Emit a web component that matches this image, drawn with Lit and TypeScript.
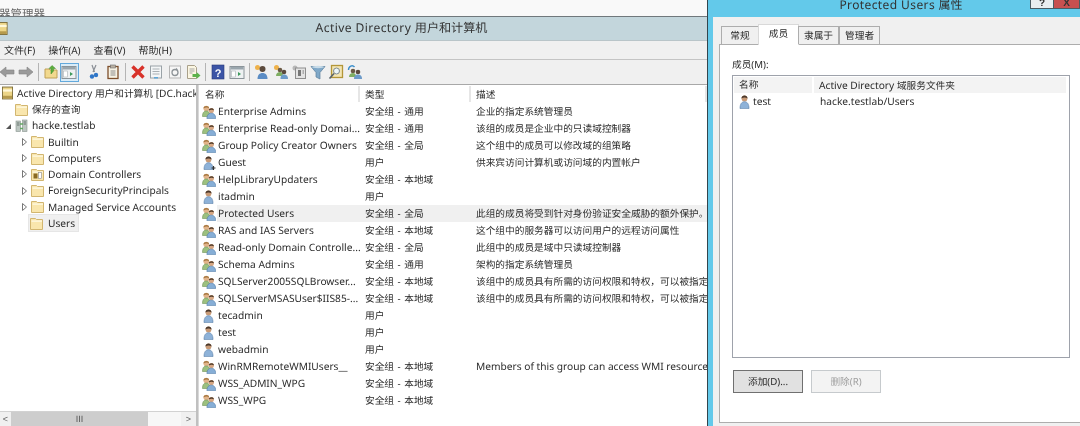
import { LitElement, html, css, svg } from "lit";
import { customElement } from "lit/decorators.js";

const group = () => html`<svg class="ic" viewBox="0 0 14 14">
  <circle cx="4.300" cy="3.600" r="2.800" fill="#e2b48a"/><path d="M1.500 3.400C1.500 .3 7.100 .3 7.100 3.200 5.400 2.200 3.300 2.400 1.500 3.400z" fill="#a5763f"/>
  <path d="M.5 11.500c0-4 1.500-5.500 3.800-5.500s3.500 1.500 3.500 5.500z" fill="#9cc07f" stroke="#6f9358" stroke-width=".6"/>
  <circle cx="9.300" cy="5.600" r="2.600" fill="#d8a884"/><path d="M6.700 5.400C6.700 2.600 11.900 2.600 11.900 5.200 10.300 4.400 8.300 4.500 6.700 5.400z" fill="#54402e"/>
  <path d="M4.900 13.600c0-3.800 2-5.400 4.400-5.400s4.400 1.600 4.400 5.400z" fill="#86aed6" stroke="#4f7ba8" stroke-width=".6"/>
</svg>`;
const user = (guest = false) => html`<svg class="ic" viewBox="0 0 14 14">
  <circle cx="6.500" cy="3.500" r="2.900" fill="#c89a76"/><path d="M3.500 3.500C3.300 -.4 9.700 -.4 9.500 3.500 8 2.300 5 2.300 3.500 3.500z" fill="#4a382b"/>
  <path d="M2 13.600c0-4.600 1.700-6.900 4.500-6.900s4.500 2.300 4.500 6.900z" fill="#8eb2d8" stroke="#557ca6" stroke-width=".6"/>
  ${guest ? svg`<path d="M9.500 12h4M11.500 10v4" stroke="#333" stroke-width="1.200"/>` : ""}
</svg>`;
const folder = (doc = false) => html`<svg class="fo" viewBox="0 0 13 13">
  <path d="M.5 1.500h5l1 1h6v10H.5z" fill="#f9e6ad" stroke="#d2b670"/>
  <path d="M1.500 3.500h10.500v1.200H1.500z" fill="#fffbe8"/>
  ${doc ? svg`<rect x="2.500" y="5.500" width="4" height="5" fill="#8a6a22"/><rect x="7.500" y="4.500" width="3" height="6" fill="#fff" stroke="#8a8a8a" stroke-width=".6"/>` : ""}
</svg>`;
const binder = () => html`<svg class="fo" viewBox="0 0 12 14">
  <rect x=".5" y=".5" width="11" height="13" fill="#ecd587" stroke="#7c6d3a"/>
  <rect x="1" y="3" width="10" height="2.500" fill="#fff8d8"/><rect x="1" y="10" width="10" height="3" fill="#b59a4c"/>
</svg>`;
const domain = () => html`<svg class="fo" viewBox="0 0 13 13">
  <rect x="1" y="2" width="4.500" height="10.500" fill="#bcc6c1" stroke="#87938d" stroke-width=".6"/>
  <rect x="7.500" y="1" width="4.500" height="11.500" fill="#bcc6c1" stroke="#87938d" stroke-width=".6"/>
  <path d="M5 5h3M5 9.500h3" stroke="#63a863" stroke-width="1.600"/><path d="M2 4h2.500M2 6h2.500M8.500 3h2.500M8.500 5h2.500" stroke="#66736d"/>
</svg>`;
const paneIcon = (c: string) => svg`<rect x="1" y="2.500" width="14" height="12" fill="#eef1f2" stroke="#8b949a"/><rect x="1.500" y="3" width="13" height="2.500" fill="#9aa6ad"/><rect x="2.500" y="7" width="4" height="6" fill="#fff" stroke="#a9b1b5" stroke-width=".6"/><path d="M9 8l3 2-3 2z" fill="${c}"/>`;

const tools = [
  html`<svg class="t" viewBox="0 0 16 16"><path d="M1 8l6-5v3h8v4H7v3z" fill="#9a9a9a" stroke="#838383" stroke-width=".6"/></svg>`,
  html`<svg class="t" viewBox="0 0 16 16"><path d="M15 8L9 3v3H1v4h8v3z" fill="#9a9a9a" stroke="#838383" stroke-width=".6"/></svg>`,
  "sep",
  html`<svg class="t" viewBox="0 0 16 16"><path d="M2 5h4l1 1h7v8H2z" fill="#f2d98e" stroke="#bfa057"/><path d="M8 10V4.500H6l3-3 3.500 3h-2V7z" fill="#5cae3c" stroke="#3c8a28" stroke-width=".5"/></svg>`,
  html`<span class="on"><svg class="t" viewBox="0 0 16 16">${paneIcon("#3c9a5c")}</svg></span>`,
  "gap",
  html`<svg class="t" viewBox="0 0 16 16"><path d="M10 1L7 8M6 1l2.500 7" stroke="#8a8f96" stroke-width="1.200"/><circle cx="6" cy="12.500" r="2.200" fill="#2f76c8"/><circle cx="10" cy="11" r="2.200" fill="#2f76c8"/></svg>`,
  html`<svg class="t" viewBox="0 0 16 16"><rect x="3" y="2.500" width="10" height="12" fill="#f7f2e4" stroke="#7d4f2c" stroke-width="1.300"/><rect x="5.500" y="1" width="5" height="3" fill="#b9b1a3" stroke="#6b6b6b" stroke-width=".6"/><path d="M5.500 7h5M5.500 9h5M5.500 11h5" stroke="#8c8c8c"/></svg>`,
  "sep",
  html`<svg class="t" viewBox="0 0 16 16"><path d="M2.500 2.500l11 11M13.500 2.500l-11 11" stroke="#d8322a" stroke-width="3.400"/></svg>`,
  html`<svg class="t" viewBox="0 0 16 16"><rect x="2.500" y="2" width="11" height="12" fill="#f4f6f7" stroke="#9aa2a7"/><path d="M4.500 5h7M4.500 7.500h7M4.500 10h7" stroke="#aab0b4"/><rect x="6" y="13" width="4" height="1.500" fill="#5da6d8"/></svg>`,
  html`<svg class="t" viewBox="0 0 16 16"><rect x="2.500" y="2" width="11" height="12" fill="#f6f6f6" stroke="#b5b5b5"/><circle cx="8" cy="8.500" r="3" fill="none" stroke="#8d9397" stroke-width="1.300"/><path d="M9 3.800l2 1.700-2.200.7z" fill="#8d9397"/></svg>`,
  html`<svg class="t" viewBox="0 0 16 16"><path d="M2.500 1.500h7l2 2v11h-9z" fill="#fbf6e2" stroke="#a9a08a"/><path d="M4.500 5h5M4.500 7h5M4.500 9h3" stroke="#a7a7a7"/><path d="M7.500 10h4V8l4 3.500-4 3.500v-2h-4z" fill="#5cb24a"/></svg>`,
  "sep",
  html`<svg class="t" viewBox="0 0 16 16"><rect x="2" y="1" width="12" height="14" fill="#3b54a6" stroke="#28397a" stroke-width=".6"/><text x="8" y="12.500" font-family="Liberation Sans" font-weight="700" font-size="11" text-anchor="middle" fill="#fff">?</text></svg>`,
  html`<svg class="t" viewBox="0 0 16 16">${paneIcon("#3c9a5c")}</svg>`,
  "sep",
  html`<svg class="t" viewBox="0 0 16 16"><circle cx="3.500" cy="3.500" r="2.500" fill="#efb24a"/><circle cx="8.500" cy="5" r="3" fill="#5b4a3c"/><path d="M3.500 15c0-4 2-6 5-6s5 2 5 6z" fill="#5b8cc4"/></svg>`,
  html`<svg class="t" viewBox="0 0 16 16"><circle cx="3.500" cy="3.500" r="2.500" fill="#efb24a"/><circle cx="7" cy="6" r="2.300" fill="#6b5a45"/><path d="M3 12c0-3 2-4 4-4s3 1 3 4z" fill="#7fae62"/><circle cx="11" cy="8" r="2.300" fill="#5b4a3c"/><path d="M7.500 15c0-3.500 1.500-4.500 3.500-4.500s4 1 4 4.500z" fill="#6d9bc9"/></svg>`,
  html`<svg class="t" viewBox="0 0 16 16"><circle cx="4" cy="4" r="2.500" fill="#b8b8b8"/><rect x="4.500" y="4" width="10" height="10.500" fill="#e3e3e3" stroke="#8e8e8e"/><rect x="7" y="6" width="3" height="6" fill="#777"/><path d="M11.500 7h1.500M11.500 9h1.500" stroke="#777"/></svg>`,
  html`<svg class="t" viewBox="0 0 16 16"><path d="M1 2.500h14L10 8.500V15l-4-2V8.500z" fill="#7fa8c8" stroke="#5b7f9c" stroke-width=".7"/><ellipse cx="8" cy="3" rx="6" ry="1.200" fill="#c7dbe8"/></svg>`,
  html`<svg class="t" viewBox="0 0 16 16"><rect x="3.500" y="1.500" width="11" height="12" fill="#f3e6b4" stroke="#b39638" stroke-width="1.300"/><circle cx="8.500" cy="7" r="3" fill="#eef6f8" stroke="#7c8a8f"/><path d="M6 9.500L1.500 14.500" stroke="#59636a" stroke-width="1.600"/></svg>`,
  html`<svg class="t" viewBox="0 0 16 16"><path d="M1.500 6c0-4 4-5.500 6-3" fill="none" stroke="#3a8ecb" stroke-width="1.400"/><circle cx="6" cy="7" r="2.300" fill="#6b5a45"/><path d="M2 13c0-3 2-4 4-4s3 1 3 4z" fill="#7fae62"/><circle cx="11" cy="8" r="2.300" fill="#5b4a3c"/><path d="M7 15c0-3.500 2-4.500 4-4.500s4 1 4 4.500z" fill="#6d9bc9"/></svg>`,
];

const LOCAL = "安全组 - 本地域", GLOBAL = "安全组 - 全局", UNI = "安全组 - 通用", USER = "用户";
const PERM = "该组中的成员具有所需的访问权限和特权，可以被指定...";
const rows: [string, string, string, string, boolean?][] = [
  ["g", "Enterprise Admins", UNI, "企业的指定系统管理员"],
  ["g", "Enterprise Read-only Domai...", UNI, "该组的成员是企业中的只读域控制器"],
  ["g", "Group Policy Creator Owners", GLOBAL, "这个组中的成员可以修改域的组策略"],
  ["q", "Guest", USER, "供来宾访问计算机或访问域的内置帐户"],
  ["g", "HelpLibraryUpdaters", LOCAL, ""],
  ["u", "itadmin", USER, ""],
  ["g", "Protected Users", GLOBAL, "此组的成员将受到针对身份验证安全威胁的额外保护。", true],
  ["g", "RAS and IAS Servers", LOCAL, "这个组中的服务器可以访问用户的远程访问属性"],
  ["g", "Read-only Domain Controlle...", GLOBAL, "此组中的成员是域中只读域控制器"],
  ["g", "Schema Admins", UNI, "架构的指定系统管理员"],
  ["g", "SQLServer2005SQLBrowser...", LOCAL, PERM],
  ["g", "SQLServerMSASUser$IIS85-...", LOCAL, PERM],
  ["u", "tecadmin", USER, ""],
  ["u", "test", USER, ""],
  ["u", "webadmin", USER, ""],
  ["g", "WinRMRemoteWMIUsers__", LOCAL, "Members of this group can access WMI resources..."],
  ["g", "WSS_ADMIN_WPG", LOCAL, ""],
  ["g", "WSS_WPG", LOCAL, ""],
];

const tree = [
  { l: 0, t: html`<span class="en">Active Directory </span>用户和计算机<span class="en"> [DC.hacke.testlab]</span>`, i: binder(), a: "" },
  { l: 1, t: "保存的查询", i: folder(), a: "" },
  { l: 1, t: html`<span class="en">hacke.testlab</span>`, i: domain(), a: "open" },
  { l: 2, t: html`<span class="en">Builtin</span>`, i: folder(), a: "closed" },
  { l: 2, t: html`<span class="en">Computers</span>`, i: folder(), a: "closed" },
  { l: 2, t: html`<span class="en">Domain Controllers</span>`, i: folder(true), a: "closed" },
  { l: 2, t: html`<span class="en">ForeignSecurityPrincipals</span>`, i: folder(), a: "closed" },
  { l: 2, t: html`<span class="en">Managed Service Accounts</span>`, i: folder(), a: "closed" },
  { l: 2, t: html`<span class="en">Users</span>`, i: folder(), a: "", sel: true },
];

@customElement("app-root")
export class AppRoot extends LitElement {
  static styles = css`
    :host {
      display: grid; grid-template-columns: 707px 373px; width: 1080px; height: 426px; overflow: hidden;
      background: #fff; color: #2b2b2b; filter: blur(.4px); text-rendering: geometricPrecision;
      font: 9.7px/1 "Noto Sans", "Noto Sans CJK SC", sans-serif;
    }
    .en { font-size: 10.200px; }
    .main { display: flex; flex-direction: column; height: 426px; overflow: hidden; }
    .strip { height: 16px; flex: none; background: #f9f9f9; overflow: hidden; padding-top: 9px; box-sizing: border-box; font-size: 11.500px; color: #666; line-height: 11px; }
    .strip span { display: block; margin-left: -1px; }
    .title { height: 25px; flex: none; box-sizing: border-box; background: #c3d6dc; border-top: 1px solid #70787c; border-bottom: 1px solid #b9c5c9; display: grid; grid-template-columns: auto 1fr; align-items: center; font-size: 12.100px; color: #333; }
    .title svg { width: 12px; height: 13px; margin-left: -4px; }
    .title span { text-align: center; padding-left: 84px; }
    .title .lat { letter-spacing: .4px; padding: 0; }
    .menu { height: 19px; flex: none; box-sizing: border-box; background: #f0f0f0; display: flex; align-items: center; padding-left: 4px; gap: 13px; border-bottom: 1px solid #c4c4c4; font-size: 10px; }
    .tools { height: 25px; flex: none; box-sizing: border-box; background: #f0f0f0; border-bottom: 1px solid #a8a8a8; display: flex; align-items: center; padding-right: 0; }
    .tools > :first-child { margin-left: -2.300px; }
    .cell { width: 18.600px; height: 22px; display: flex; align-items: center; justify-content: center; flex: none; }
    .t { width: 16px; height: 16px; display: block; }
    .on { width: 19px; height: 19px; display: flex; align-items: center; justify-content: center; background: #d9ecf8; border: 1px solid #63a9dc; box-sizing: border-box; flex: none; }
    .sep { width: 1px; height: 18px; background: #b4b4b4; margin: 0 2.700px; flex: none; }
    .gap { width: 6.400px; flex: none; }
    .panes { flex: 1; min-height: 0; display: grid; grid-template-columns: 196px 1fr; column-gap: 3px; background: #c0c0c0; }
    .left { background: #fff; display: flex; flex-direction: column; overflow: hidden; min-width: 0; }
    .treebox { flex: 1; overflow: hidden; }
    .node { height: 16.250px; display: flex; align-items: center; white-space: nowrap; }
    .l0 { padding-left: 2px; } .l1 { padding-left: 3px; } .l2 { padding-left: 19px; }
    .arrow { width: 11px; height: 8px; flex: none; margin-right: 1px; display: flex; justify-content: center; }
    .l0 .arrow { display: none; }
    .arrow svg { width: 7px; height: 8px; display: block; }
    .fo { width: 13px; height: 13px; flex: none; margin-right: 4px; }
    .l0 .fo { width: 11px; height: 14px; margin-right: 4px; }
    .sel { background: #f0f0f0; box-shadow: 0 0 0 1px #e6e6e6; display: flex; align-items: center; height: 16px; padding-left: 1px; padding-right: 3px; margin-left: -2px; }
    .sel .fo { margin-right: 5px; }
    .sb { height: 15px; flex: none; background: #f0f0f0; display: grid; grid-template-columns: 11px 137px 33px 15px; border-top: 1px solid #d2d2d2; box-sizing: border-box; color: #606060; font: 9px/1 "Liberation Sans", sans-serif; }
    .sb span { display: flex; align-items: center; justify-content: center; }
    .sb .thumb { background: #cdcdcd; color: #555; }
    .sb .track { background: #f7f7f7; }
    .right { background: #fff; overflow: hidden; min-width: 0; padding-top: 1px; border-left: 1px solid #d9d9d9; margin-left: -1px; }
    .row { display: grid; grid-template-columns: 161px 111px 1fr; height: 17px; align-items: center; white-space: nowrap; }
    .hd { background: #f2f2f2; border-bottom: 1px solid #fff; box-sizing: border-box; }
    .hd span { background: #fff; height: 100%; display: flex; align-items: center; padding: 1px 0 0 5px; border-right: 2px solid #e6e6e6; box-sizing: border-box; }
    .hd span:first-child { padding-left: 6px; }
    .nm { display: flex; align-items: center; padding-left: 3px; height: 17px; overflow: hidden; }
    .ic { width: 14px; height: 14px; flex: none; margin-right: 1px; display: block; }
    .ty { padding-left: 5px; word-spacing: 1px; }
    .ds { padding-left: 5px; overflow: hidden; height: 17px; line-height: 17px; }
    .row .txt { height: 17px; line-height: 17px; flex: 1; padding-left: 1px; }
    .hot .txt, .hot .ty, .hot .ds { background: #f0f0f0; }
    .hot .ty { height: 17px; line-height: 17px; }
    .dlg { background: #63c9ea; display: flex; flex-direction: column; height: 426px; border-left: 1px solid #33454d; box-sizing: border-box; overflow: hidden; }
    .cap { height: 17px; flex: none; display: grid; grid-template-columns: 1fr 24px 26px; font-size: 12px; color: #333; }
    .cap .name { text-align: center; margin-top: -2px; padding-left: 64px; line-height: 13px; }
    .cap .lat { letter-spacing: .4px; }
    .help, .close { height: 9px; border: 1px solid #4b5c64; border-top: 0; box-sizing: border-box; display: flex; align-items: flex-end; justify-content: center; font: 700 10px/9px "Liberation Sans", sans-serif; }
    .help { background: #e9eef0; } .close { background: #c75050; border-left: 0; }
    .body { flex: 1; margin-left: 5px; background: #f0f0f0; padding: 7px 0 3px 6px; display: flex; flex-direction: column; min-height: 0; }
    .tabs { display: flex; height: 20px; flex: none; align-items: flex-end; padding-left: 2px; position: relative; z-index: 1; }
    .tab { height: 18px; padding: 0 5px; box-sizing: border-box; border: 1px solid #adadad; border-bottom: 0; margin-right: -1px; background: #f0f0f0; display: flex; align-items: center; justify-content: center; min-width: 38px; }
    .tab.act { height: 21px; width: 41px; background: #fff; border-color: #d9d9d9; margin-bottom: -1px; padding-bottom: 3px; }
    .tab.w { margin-right: 0; margin-left: 1px; }
    .panel { flex: 1; background: #fff; border: 1px solid #adadad; border-right: 0; padding: 15px 10px 29px 12px; display: flex; flex-direction: column; min-height: 0; }
    .lab { height: 15px; flex: none; }
    .lst { flex: 1; border: 1px solid #9ea2ab; display: flex; flex-direction: column; padding-top: 1px; min-height: 0; }
    .lrow { display: grid; grid-template-columns: 80px 1fr; height: 17px; align-items: center; flex: none; }
    .lh { background: #f3f3f3; height: 16px; margin: 0 1px; }
    .lh > span { height: 100%; display: block; line-height: 16px; padding-left: 5px; box-sizing: border-box; border-right: 2px solid #fff; white-space: pre; }
    .lrow .c1 { display: flex; align-items: center; padding-left: 5px; }
    .lrow .c2 { padding-left: 6px; margin-left: 1px; }
    .btns { display: flex; gap: 8px; padding-top: 12px; padding-left: 1px; flex: none; }
    .btn { width: 70px; height: 23px; box-sizing: border-box; border: 1px solid #707070; background: #e1e1e1; display: flex; align-items: center; justify-content: center; white-space: pre; }
    .btn.off { background: #f3f3f3; border-color: #c6cacd; color: #a0a0a0; }
  `;

  renderTree() {
    return tree.map((n: any) => {
      const arrow = n.a === "open"
        ? html`<svg viewBox="0 0 7 8"><path d="M6 2v5H1z" fill="#555"/></svg>`
        : n.a === "closed" ? html`<svg viewBox="0 0 7 8"><path d="M1.500 .5l4 3.500-4 3.500z" fill="#fff" stroke="#777"/></svg>` : "";
      return html`<div class="node l${n.l}">
        <span class="arrow">${arrow}</span>
        ${n.sel ? html`<span class="sel">${n.i}<span>${n.t}</span></span>` : html`${n.i}<span>${n.t}</span>`}
      </div>`;
    });
  }

  render() {
    return html`
      <div class="main">
        <div class="strip"><span>器管理器</span></div>
        <div class="title">${binder()}<span><span class="lat">Active Directory </span>用户和计算机</span></div>
        <div class="menu"><span>文件(F)</span><span>操作(A)</span><span>查看(V)</span><span>帮助(H)</span></div>
        <div class="tools">
          ${tools.map((t) => t === "sep" ? html`<span class="sep"></span>` : t === "gap" ? html`<span class="gap"></span>` : html`<span class="cell">${t}</span>`)}
        </div>
        <div class="panes">
          <div class="left">
            <div class="treebox">${this.renderTree()}</div>
            <div class="sb"><span>&lt;</span><span class="thumb">III</span><span class="track"></span><span>&gt;</span></div>
          </div>
          <div class="right">
            <div class="row hd"><span>名称</span><span>类型</span><span>描述</span></div>
            ${rows.map(([k, n, t, d, hot]) => html`<div class="row ${hot ? "hot" : ""}">
              <div class="nm">${k === "g" ? group() : user(k === "q")}<span class="txt en">${n}</span></div>
              <div class="ty">${t}</div>
              <div class="ds ${/^[A-Z]/.test(d) ? "en" : ""}">${d}</div>
            </div>`)}
          </div>
        </div>
      </div>
      <div class="dlg">
        <div class="cap"><div class="name"><span class="lat">Protected Users </span>属性</div><div class="help">?</div><div class="close">X</div></div>
        <div class="body">
          <div class="tabs">
            <div class="tab">常规</div><div class="tab act">成员</div><div class="tab">隶属于</div><div class="tab w">管理者</div>
          </div>
          <div class="panel">
            <div class="lab">成员(M):</div>
            <div class="lst">
              <div class="lrow lh"><span>名称</span><span><span class="en">Active Directory </span>域服务文件夹</span></div>
              <div class="lrow"><div class="c1">${user()}<span class="en">test</span></div><div class="c2 en">hacke.testlab/Users</div></div>
            </div>
            <div class="btns"><div class="btn">添加(D)...</div><div class="btn off">删除(R)</div></div>
          </div>
        </div>
      </div>
    `;
  }
}
